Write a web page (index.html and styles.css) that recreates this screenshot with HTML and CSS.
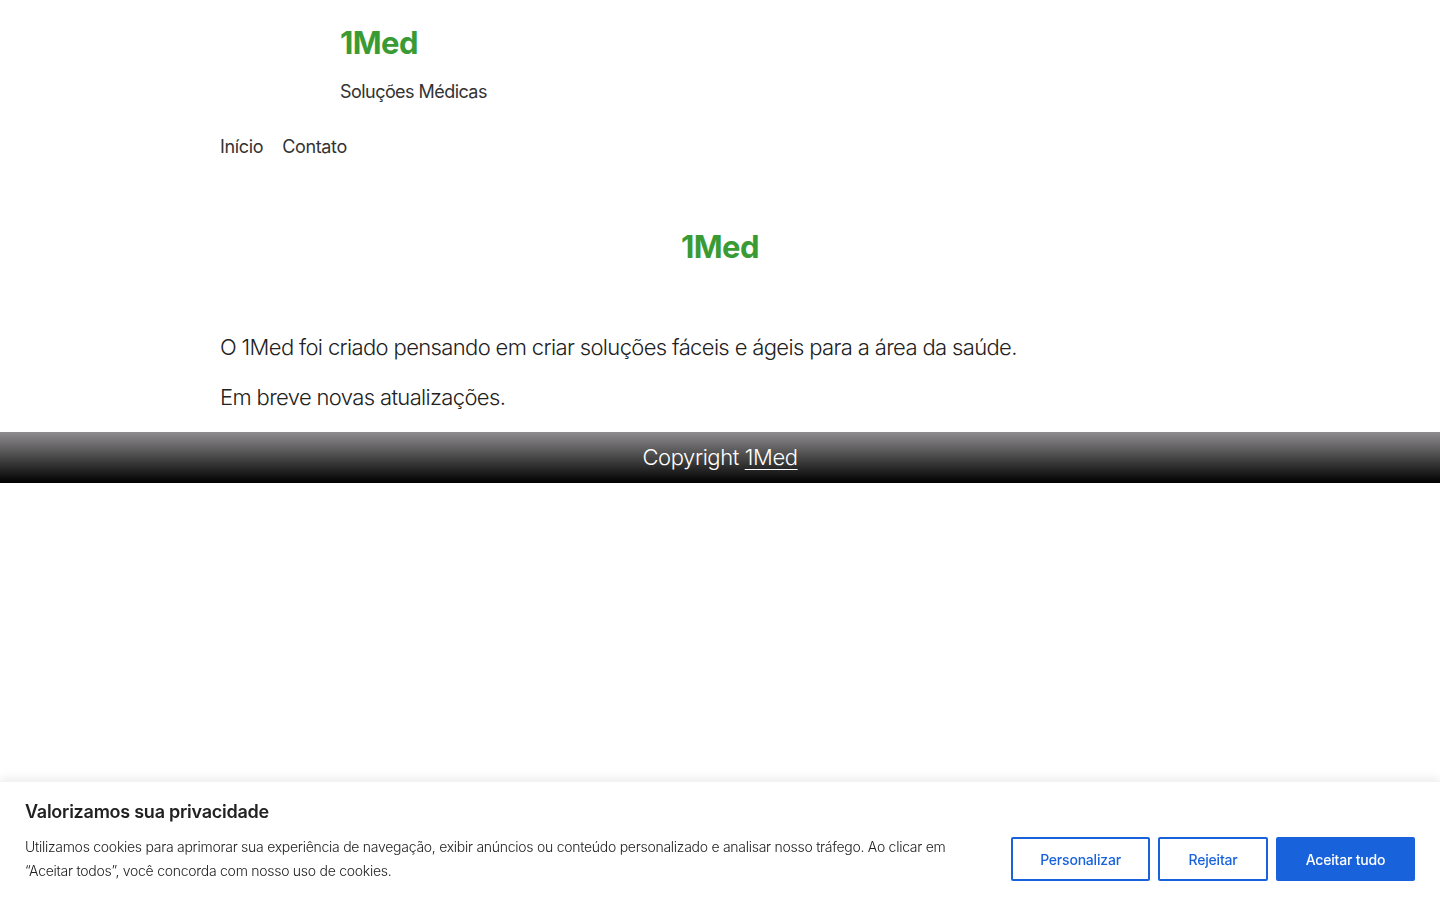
FILE: index.html
```html
<!DOCTYPE html>
<html lang="pt-BR">
<head>
    <meta charset="UTF-8">
    <meta name="viewport" content="width=device-width, initial-scale=1.0">
    <title>1Med – Soluções Médicas</title>
    <link rel="stylesheet" href="styles.css">
</head>
<body>
    <!-- Site header -->
    <header class="site-header">
        <div class="branding">
            <p class="site-title"><a href="#">1Med</a></p>
            <p class="site-description">Soluções Médicas</p>
        </div>
        <nav class="main-nav">
            <a href="#">Início</a>
            <a href="#">Contato</a>
        </nav>
    </header>

    <main class="content">
        <h1 class="page-title">1Med</h1>
        <p>O 1Med foi criado pensando em criar soluções fáceis e ágeis para a área da saúde.</p>
        <p>Em breve novas atualizações.</p>
    </main>

    <footer class="site-footer">
        Copyright <a href="#">1Med</a>
    </footer>

    <!-- Cookie consent bar -->
    <div class="cookie-bar">
        <div class="cookie-text">
            <p class="cookie-title">Valorizamos sua privacidade</p>
            <p class="cookie-desc">Utilizamos cookies para aprimorar sua experiência de navegação, exibir anúncios ou conteúdo personalizado e analisar nosso tráfego. Ao clicar em “Aceitar todos”, você concorda com nosso uso de cookies.</p>
        </div>
        <div class="cookie-buttons">
            <button class="btn btn-outline btn-custom">Personalizar</button>
            <button class="btn btn-outline btn-reject">Rejeitar</button>
            <button class="btn btn-solid">Aceitar tudo</button>
        </div>
    </div>
</body>
</html>
```

FILE: styles.css
```css
/* General styles */
body {
    margin: 0;
    font-family: Inter, "Noto Sans", sans-serif;
    color: #222;
    background: #fff;
}

a {
    color: inherit;
    text-decoration: none;
}

p {
    margin: 0;
}

/* Header */
.site-header {
    width: 1000px;
    margin: 0 auto;
}

.branding {
    padding: 23px 0 0 120px;
}

.site-title {
    font-size: 31px;
    font-weight: 700;
    line-height: 40px;
    letter-spacing: -0.6px;
    color: #3a9b35;
}

.site-description {
    margin-top: 16px;
    font-size: 18px;
    line-height: 26px;
    color: #333;
    letter-spacing: -0.55px;
}

.main-nav {
    display: flex;
    gap: 19px;
    margin-top: 29px;
    font-size: 18px;
    line-height: 26px;
    color: #333;
    letter-spacing: -0.35px;
}

/* Main content */
.content {
    width: 1000px;
    margin: 0 auto;
    padding-bottom: 20px;
}

.page-title {
    margin: 67px 0 0;
    text-align: center;
    font-size: 31px;
    font-weight: 700;
    line-height: 40px;
    letter-spacing: -0.6px;
    color: #3a9b35;
}

.content p {
    font-size: 22px;
    font-weight: 300;
    line-height: 30px;
    letter-spacing: -0.64px;
    color: #222;
    margin-top: 20px;
}

.content .page-title + p {
    margin-top: 65px;
}

/* Footer */
.site-footer {
    height: 51px;
    line-height: 51px;
    text-align: center;
    font-size: 22px;
    font-weight: 300;
    letter-spacing: -0.4px;
    color: #fff;
    background: linear-gradient(to bottom, #8f8d8f, #000);
}

.site-footer a {
    text-decoration: underline;
    text-underline-offset: 4px;
    text-decoration-thickness: 1px;
}

/* Cookie consent bar */
.cookie-bar {
    position: fixed;
    left: 0;
    right: 0;
    bottom: 0;
    display: flex;
    align-items: flex-end;
    justify-content: space-between;
    gap: 60px;
    padding: 19px 25px 17px 25px;
    background: #fff;
    border-top: 1px solid #f4f4f4;
    box-shadow: 0 -1px 10px rgba(172, 171, 171, 0.3);
}

.cookie-title {
    font-size: 18px;
    font-weight: 600;
    line-height: 22px;
    letter-spacing: -0.25px;
    color: #212121;
}

.cookie-desc {
    margin-top: 12px;
    max-width: 940px;
    font-size: 14px;
    font-weight: 350;
    line-height: 24px;
    letter-spacing: -0.27px;
    color: #212121;
}

.cookie-buttons {
    display: flex;
    gap: 8px;
    margin-bottom: 2px;
}

.btn {
    height: 44px;
    padding: 0;
    font-family: inherit;
    font-size: 14px;
    font-weight: 500;
    letter-spacing: -0.2px;
    border-radius: 2px;
    border: 2px solid #1863dc;
    cursor: pointer;
}

.btn-outline {
    background: transparent;
    color: #1863dc;
}

.btn-custom {
    width: 139px;
}

.btn-reject {
    width: 110px;
}

.btn-solid {
    width: 139px;
    background: #1863dc;
    color: #fff;
}
```
